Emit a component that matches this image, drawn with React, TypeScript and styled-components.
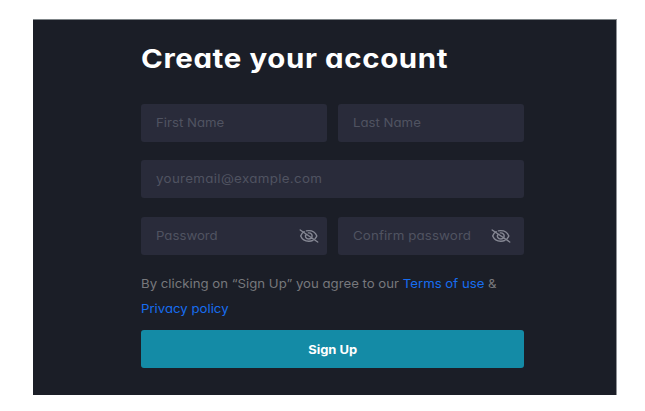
import React from "react";
import styled, { createGlobalStyle } from "styled-components";

const GlobalStyle = createGlobalStyle`
  * { box-sizing: border-box; }
  body {
    margin: 0;
    background: #fff;
    font-family: Inter, "Open Sans", sans-serif;
    font-feature-settings: "cv11" 1, "calt" 0;
  }
`;

const Page = styled.main`
  height: 411px;
  padding: 19px 28px 16px 33px;
  overflow: hidden;
`;

const Panel = styled.section`
  width: 584px;
  height: 376px;
  padding: 20px 92px 0 108px;
  background: #1b1e27;
  border-top: 1px solid #7f8588;
  border-right: 1px solid #8f9297;
`;

const Form = styled.form`
  display: flex;
  flex-direction: column;
  width: 383px;
`;

/* Horizontally widened lettering; $stretch is the width factor. */
const Wide = styled.span<{ $stretch: number; $spacing?: number; $center?: boolean }>`
  display: inline-block;
  white-space: nowrap;
  letter-spacing: ${(p) => p.$spacing ?? 0}px;
  transform: scaleX(${(p) => p.$stretch});
  transform-origin: ${(p) => (p.$center ? "center" : "left")};
`;

const Title = styled.h1`
  margin: 0 0 25.7px;
  height: 38px;
  line-height: 38px;
  font-size: 26px;
  font-weight: 650;
  color: #fff;
`;

const Row = styled.div`
  display: grid;
  grid-auto-flow: column;
  grid-auto-columns: 1fr;
  gap: 11px;
  margin-bottom: 18.5px;
`;

const Field = styled.label<{ $endInset?: number }>`
  display: flex;
  align-items: center;
  justify-content: space-between;
  height: 38px;
  padding: 0 ${(p) => p.$endInset ?? 8}px 0 15px;
  border-radius: 3px;
  background: #292b3a;
  color: #505361;
  font-size: 12px;
  line-height: 18px;
`;

const Terms = styled.p`
  display: flex;
  flex-direction: column;
  align-items: flex-start;
  margin: -2px 0 0;
  height: 59px;
  font-size: 12px;
  line-height: 25px;
  color: #77787c;
`;

const Link = styled.a`
  color: #176df0;
`;

const Submit = styled.button`
  height: 38px;
  padding: 0;
  border: 0;
  border-radius: 3px;
  background: #148ba6;
  color: #fff;
  font: inherit;
  font-size: 12px;
  font-weight: 650;
`;

const EyeIcon = styled.svg`
  flex: none;
  width: 20px;
  height: 14px;
  fill: none;
  stroke: #858793;
  stroke-width: 1.4;
  stroke-linecap: round;
`;

const HiddenEye = () => (
  <EyeIcon viewBox="0 0 20 14">
    <path d="M5.2 2.7C3.5 3.6 2.3 5.2 1.7 7c1.4 3.4 4.5 5.2 8.1 5.2 1.6 0 3-.3 4.2-.9M7.4 1.9c.8-.2 1.6-.3 2.4-.3 3.6 0 6.7 2 8 5.4-.4 1.1-1 2-1.8 2.8" />
    <path d="M7.2 5.2C5.3 7.3 7 10 9.8 10c.9 0 1.6-.2 2.2-.6M9.3 3.9c2.5-.2 4.4 1.7 3.7 3.8M1.2 1l17.5 12" />
  </EyeIcon>
);

export default function App() {
  return (
    <>
      <GlobalStyle />
      <Page>
        <Panel>
          <Form>
            <Title><Wide $stretch={1.132} $spacing={0.55}>Create your account</Wide></Title>
            <Row>
              <Field><Wide $stretch={1.1}>First Name</Wide></Field>
              <Field><Wide $stretch={1.1}>Last Name</Wide></Field>
            </Row>
            <Row>
              <Field><Wide $stretch={1.11} $spacing={0.3}>youremail@example.com</Wide></Field>
            </Row>
            <Row>
              <Field><Wide $stretch={1.1}>Password</Wide><HiddenEye /></Field>
              <Field $endInset={13}>
                <Wide $stretch={1.11} $spacing={0.1}>Confirm password</Wide>
                <HiddenEye />
              </Field>
            </Row>
            <Terms>
              <Wide $stretch={1.1}>
                By clicking on “Sign Up” you agree to our <Link>Terms of use</Link> &amp;
              </Wide>
              <Wide $stretch={1.1}><Link>Privacy policy</Link></Wide>
            </Terms>
            <Submit type="button"><Wide $stretch={1.08} $center>Sign Up</Wide></Submit>
          </Form>
        </Panel>
      </Page>
    </>
  );
}
